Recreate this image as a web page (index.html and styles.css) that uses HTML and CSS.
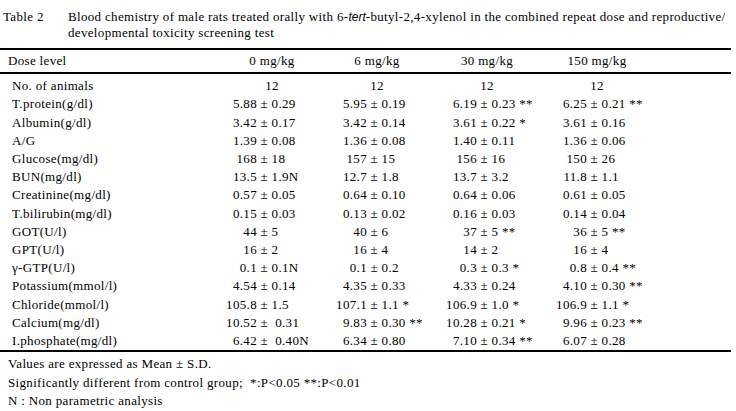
FILE: index.html
```html
<!DOCTYPE html>
<html>
<head>
<meta charset="utf-8">
<link rel="stylesheet" href="styles.css">
</head>
<body>
<div class="caption">
  <div class="cap-no">Table 2</div>
  <div class="cap-text">Blood chemistry of male rats treated orally with 6-<i class="it">tert</i>-butyl-2,4-xylenol in the combined repeat dose and reproductive/<br>developmental toxicity screening test</div>
</div>
<div class="tbl">
  <div class="row thead"><div class="lbl hd">Dose level</div><div class="ctr">0 mg/kg</div><div class="ctr cn">6 mg/kg</div><div class="ctr cn">30 mg/kg</div><div class="ctr cn">150 mg/kg</div><div></div></div>
  <div class="tbody">
    <div class="row"><div class="lbl">No. of animals</div><div class="ctr">12</div><div class="ctr cn">12</div><div class="ctr cn">12</div><div class="ctr cn">12</div><div></div></div>
    <div class="row"><div class="lbl">T.protein(g/dl)</div><div><span class="m">5.88</span> ± 0.29</div><div><span class="m">5.95</span> ± 0.19</div><div><span class="m">6.19</span> ± 0.23 **</div><div><span class="m">6.25</span> ± 0.21 **</div><div></div></div>
    <div class="row"><div class="lbl">Albumin(g/dl)</div><div><span class="m">3.42</span> ± 0.17</div><div><span class="m">3.42</span> ± 0.14</div><div><span class="m">3.61</span> ± 0.22 *</div><div><span class="m">3.61</span> ± 0.16</div><div></div></div>
    <div class="row"><div class="lbl">A/G</div><div><span class="m">1.39</span> ± 0.08</div><div><span class="m">1.36</span> ± 0.08</div><div><span class="m">1.40</span> ± 0.11</div><div><span class="m">1.36</span> ± 0.06</div><div></div></div>
    <div class="row"><div class="lbl">Glucose(mg/dl)</div><div><span class="m">168</span> ± 18</div><div><span class="m">157</span> ± 15</div><div><span class="m">156</span> ± 16</div><div><span class="m">150</span> ± 26</div><div></div></div>
    <div class="row"><div class="lbl">BUN(mg/dl)</div><div><span class="m">13.5</span> ± 1.9N</div><div><span class="m">12.7</span> ± 1.8</div><div><span class="m">13.7</span> ± 3.2</div><div><span class="m">11.8</span> ± 1.1</div><div></div></div>
    <div class="row"><div class="lbl">Creatinine(mg/dl)</div><div><span class="m">0.57</span> ± 0.05</div><div><span class="m">0.64</span> ± 0.10</div><div><span class="m">0.64</span> ± 0.06</div><div><span class="m">0.61</span> ± 0.05</div><div></div></div>
    <div class="row"><div class="lbl">T.bilirubin(mg/dl)</div><div><span class="m">0.15</span> ± 0.03</div><div><span class="m">0.13</span> ± 0.02</div><div><span class="m">0.16</span> ± 0.03</div><div><span class="m">0.14</span> ± 0.04</div><div></div></div>
    <div class="row"><div class="lbl">GOT(U/l)</div><div><span class="m">44</span> ± 5</div><div><span class="m">40</span> ± 6</div><div><span class="m">37</span> ± 5 **</div><div><span class="m">36</span> ± 5 **</div><div></div></div>
    <div class="row"><div class="lbl">GPT(U/l)</div><div><span class="m">16</span> ± 2</div><div><span class="m">16</span> ± 4</div><div><span class="m">14</span> ± 2</div><div><span class="m">16</span> ± 4</div><div></div></div>
    <div class="row"><div class="lbl">γ-GTP(U/l)</div><div><span class="m">0.1</span> ± 0.1N</div><div><span class="m">0.1</span> ± 0.2</div><div><span class="m">0.3</span> ± 0.3 *</div><div><span class="m">0.8</span> ± 0.4 **</div><div></div></div>
    <div class="row"><div class="lbl">Potassium(mmol/l)</div><div><span class="m">4.54</span> ± 0.14</div><div><span class="m">4.35</span> ± 0.33</div><div><span class="m">4.33</span> ± 0.24</div><div><span class="m">4.10</span> ± 0.30 **</div><div></div></div>
    <div class="row"><div class="lbl">Chloride(mmol/l)</div><div><span class="m">105.8</span> ± 1.5</div><div><span class="m">107.1</span> ± 1.1 *</div><div><span class="m">106.9</span> ± 1.0 *</div><div><span class="m">106.9</span> ± 1.1 *</div><div></div></div>
    <div class="row"><div class="lbl">Calcium(mg/dl)</div><div><span class="m">10.52</span> ±  0.31</div><div><span class="m">9.83</span> ± 0.30 **</div><div><span class="m">10.28</span> ± 0.21 *</div><div><span class="m">9.96</span> ± 0.23 **</div><div></div></div>
    <div class="row"><div class="lbl">I.phosphate(mg/dl)</div><div><span class="m">6.42</span> ±  0.40N</div><div><span class="m">6.34</span> ± 0.80</div><div><span class="m">7.10</span> ± 0.34 **</div><div><span class="m">6.07</span> ± 0.28</div><div></div></div>
  </div>
</div>
<div class="notes">
  <p>Values are expressed as Mean ± S.D.</p>
  <p>Significantly different from control group;  *:P&lt;0.05 **:P&lt;0.01</p>
  <p>N : Non parametric analysis</p>
</div>
</body>
</html>
```
FILE: styles.css
```css
body {
  margin: 0;
  font: 13px "Liberation Serif", "Times New Roman", serif;
  letter-spacing: 0.33px;
  color: #000;
  background: #fff;
}
.caption {
  display: flex;
  padding-top: 9px;
  line-height: 16px;
}
.cap-no {
  width: 68px;
  padding-left: 3px;
  box-sizing: border-box;
  flex: none;
}
.cap-text {
  flex: 1;
  white-space: nowrap;
}
.it {
  font-family: "Liberation Sans", Arial, sans-serif;
  font-size: 12px;
  letter-spacing: 0;
}
.tbl {
  width: 731px;
  margin-top: 7px;
}
.row {
  display: grid;
  grid-template-columns: 217px 110px 110px 110px 110px 1fr;
  line-height: 18.2px;
  white-space: pre;
}
.thead {
  border-top: 2px solid #000;
  border-bottom: 2px solid #000;
  padding: 2px 0;
}
.tbody {
  padding-top: 3px;
  border-bottom: 2px solid #000;
}
.lbl {
  padding-left: 12px;
}
.lbl.hd {
  padding-left: 8px;
}
.ctr {
  text-align: center;
}
.ctr.cn {
  padding-right: 10px;
}
.m {
  display: inline-block;
  width: 40px;
  text-align: right;
}
.notes {
  padding: 3px 0 0 8px;
  line-height: 18.5px;
}
.notes p {
  margin: 0;
  white-space: pre;
}
```
